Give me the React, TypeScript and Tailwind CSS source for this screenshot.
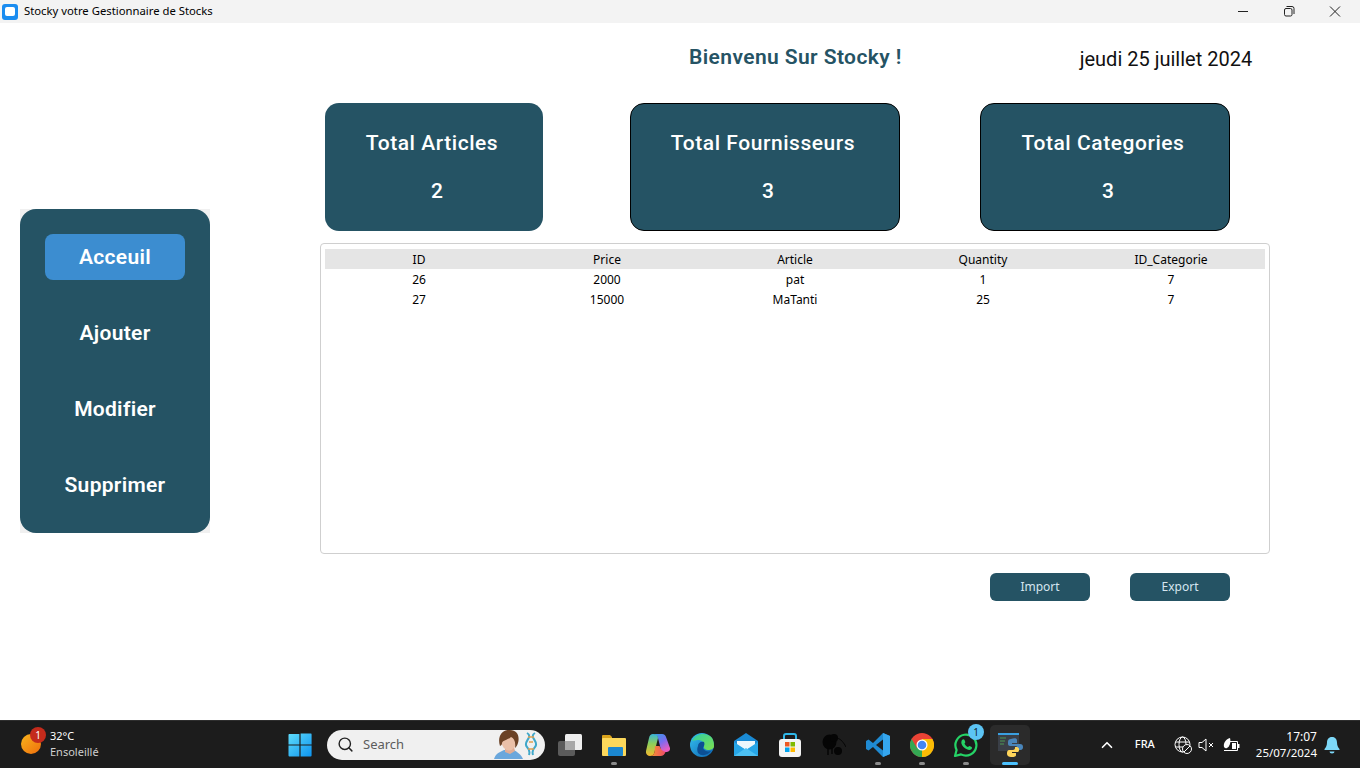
import { ChevronUp, Search } from "lucide-react";

const roboto = "font-['Roboto',sans-serif]";
const segoe = "font-['Noto_Sans',sans-serif]";

const rows = [
  ["26", "2000", "pat", "1", "7"],
  ["27", "15000", "MaTanti", "25", "7"],
];

function StatCard({ title, value, className, valueClass }: { title: string; value: string; className: string; valueClass: string }) {
  return (
    <div className={`h-[128px] shrink-0 rounded-[14px] border bg-[#255364] pr-[4px] text-white ${className}`}>
      <div className="mt-[25px] h-[28px] text-center text-[21px] leading-[28px] font-medium tracking-[0.55px]">{title}</div>
      <div className={`mt-[20px] h-[28px] text-center text-[21px] leading-[28px] font-medium ${valueClass}`}>{value}</div>
    </div>
  );
}

function NavItem({ label, active }: { label: string; active?: boolean }) {
  return (
    <div className={`flex h-[46px] w-[140px] items-center justify-center rounded-[8px] pt-[2px] text-[21px] font-semibold tracking-[0.3px] text-white ${active ? "bg-[#3c8dd0]" : ""}`}>
      {label}
    </div>
  );
}

function WinLogo() {
  return (
    <svg width="24" height="24" viewBox="0 0 24 24">
      <defs>
        <linearGradient id="wl" x1="0" y1="0" x2="1" y2="1">
          <stop offset="0" stopColor="#5fdcfb" />
          <stop offset="1" stopColor="#0d94f0" />
        </linearGradient>
      </defs>
      <path d="M1 1h10.4v10.4H0.5V2a1 1 0 0 1 .5-1zM12.6 .6H23a1 1 0 0 1 .6.9v9.9H12.6zM.5 12.6h10.9v10.9H1.5a1 1 0 0 1-1-1zM12.6 12.6h11v9.9a1 1 0 0 1-1 1h-10z" fill="url(#wl)" />
    </svg>
  );
}

function TaskIcon({ children, dot, active }: { children: React.ReactNode; dot?: boolean; active?: boolean }) {
  return (
    <div className={`relative flex h-[40px] items-center justify-center rounded-[5px] ${active ? "ml-[2px] w-[40px] bg-[#2b2b2b]" : "w-[44px]"}`}>
      {children}
      {dot ? <span className="absolute bottom-[0px] left-[19px] h-[3px] w-[6px] rounded-full bg-[#8c8c8c]" /> : null}
      {active ? <span className="absolute bottom-[0px] left-[12px] h-[3px] w-[16px] rounded-full bg-[#4cc2ff]" /> : null}
    </div>
  );
}

export default function App() {
  return (
    <div className="flex h-[768px] w-[1360px] flex-col overflow-hidden bg-white">
      {/* title bar */}
      <div className={`flex h-[23px] shrink-0 items-center bg-[#f3f3f3] text-[11.3px] text-black ${segoe}`}>
        <div className="ml-[2px] flex h-[16px] w-[16px] items-center justify-center rounded-[3px] bg-[#1a8cf0]">
          <div className="h-[9px] w-[10px] rounded-[2px] bg-white" />
        </div>
        <span className="ml-[6px]">Stocky votre Gestionnaire de Stocks</span>
        <div className="ml-auto flex items-center">
          <svg width="46" height="22" viewBox="0 0 46 22"><path d="M18 10.500h10" stroke="#222" strokeWidth="1" /></svg>
          <svg width="46" height="22" viewBox="0 0 46 22"><rect x="18.500" y="7.500" width="7.500" height="7.500" rx="1.500" fill="none" stroke="#222" /><path d="M20.500 5.500h5.500a2 2 0 0 1 2 2v5.500" fill="none" stroke="#222" /></svg>
          <svg width="46" height="22" viewBox="0 0 46 22" className="mr-[2px]"><path d="M18 5.500l10 10M28 5.500l-10 10" stroke="#222" /></svg>
        </div>
      </div>

      {/* window body */}
      <div className={`flex min-h-0 flex-1 ${roboto}`}>
        <div className="ml-[20px] mt-[186px] h-[324px] w-[190px] shrink-0 bg-[#f0f0f0]">
          <aside className="flex h-full flex-col items-center gap-[30px] rounded-[16px] bg-[#255364] pt-[25px]">
            <NavItem label="Acceuil" active />
            <NavItem label="Ajouter" />
            <NavItem label="Modifier" />
            <NavItem label="Supprimer" />
          </aside>
        </div>

        <main className="ml-[110px] w-[950px] shrink-0">
          <div className="flex h-[80px] items-start">
            <h1 className="ml-[369px] mt-[21px] text-[21px] leading-[26px] font-semibold tracking-[0.4px] whitespace-nowrap text-[#255364]">Bienvenu Sur Stocky !</h1>
            <div className="ml-[178px] mt-[23px] text-[20px] leading-[26px] whitespace-nowrap text-[#111]">jeudi 25 juillet 2024</div>
          </div>

          <div className="flex pl-[5px]">
            <StatCard title="Total Articles" value="2" className="w-[218px] border-transparent" valueClass="pl-[10px]" />
            <StatCard title="Total Fournisseurs" value="3" className="ml-[87px] w-[270px] border-black" valueClass="pl-[10px]" />
            <StatCard title="Total Categories" value="3" className="ml-[80px] w-[250px] border-black" valueClass="pl-[10px]" />
          </div>

          <div className={`mt-[12px] h-[311px] rounded-[4px] border border-[#cfcfcf] px-[4px] pt-[5px] text-[12px] text-black ${segoe}`}>
            <div className="grid h-[20px] grid-cols-5 items-center bg-[#e5e5e5] pt-[2px] text-center">
              <span>ID</span>
              <span>Price</span>
              <span>Article</span>
              <span>Quantity</span>
              <span>ID_Categorie</span>
            </div>
            {rows.map((row) => (
              <div key={row[0]} className="grid h-[20px] grid-cols-5 items-center pt-[2px] text-center">
                {row.map((cell, i) => (
                  <span key={i}>{cell}</span>
                ))}
              </div>
            ))}
          </div>

          <div className={`mt-[19px] flex gap-[40px] pl-[670px] text-[12px] text-[#d5e6f0] ${segoe}`}>
            <div className="flex h-[28px] w-[100px] items-center justify-center rounded-[6px] bg-[#255364]">Import</div>
            <div className="flex h-[28px] w-[100px] items-center justify-center rounded-[6px] bg-[#255364]">Export</div>
          </div>
        </main>
      </div>

      {/* taskbar */}
      <footer className={`flex h-[48px] shrink-0 items-center border-t border-[#2e2e2e] bg-[#1c1c1c] text-white ${segoe}`}>
        <div className="relative ml-[21px] flex w-[267px] shrink-0 items-center pb-[2px]">
          <div className="h-[20px] w-[20px] rounded-full bg-gradient-to-br from-[#f8b41c] to-[#ee6c0c]" />
          <span className="absolute left-[9px] top-[-1px] flex h-[16px] w-[16px] items-center justify-center rounded-full bg-[#c42b1c] text-[10px] leading-none text-white">1</span>
          <div className="ml-[9px] text-[11px] leading-[16px]">
            <div>32°C</div>
            <div className="text-[#cfcfcf]">Ensoleillé</div>
          </div>
        </div>
        <div className="flex w-[39px] shrink-0 items-center">
          <WinLogo />
        </div>
        <div className="flex h-[30px] w-[218px] shrink-0 items-center rounded-full bg-[#f0f0f0] pl-[10px] text-[13px] text-[#5c5c5c]">
          <Search size={17} strokeWidth={2} className="text-[#222]" />
          <span className="ml-[9px]">Search</span>
          <svg width="44" height="29" viewBox="0 0 44 29" className="ml-auto mr-[7px]">
            <path d="M0 29c2-6 6-7 10-9l10 0c3 2 7 4 9 9z" fill="#6aa7dc" />
            <path d="M11 18l0 4 5 2 5-3-1-4z" fill="#e0ad96" />
            <ellipse cx="15" cy="11" rx="7.500" ry="9.500" fill="#eac0a8" />
            <path d="M6 16C3 7 8-1 16 0c7 0 10 6 8 13-1 3-2 4-3 5 1-6-1-10-4-11-3 3-8 3-9 6 0 1 0 2-2 3z" fill="#6b4226" />
            <path d="M33 3c7 4-5 9 0 14 2 2 3 5 2 8M41 3c-7 4 5 9 0 14-2 2-3 5-2 8" fill="none" stroke="#3fa7c9" strokeWidth="2" />
            <path d="M34 7h6M35 12h4M34 19h6" stroke="#e0a050" strokeWidth="1.400" />
          </svg>
        </div>

        <div className="ml-[3px] flex shrink-0 items-center">
          <TaskIcon>
            <svg width="26" height="24" viewBox="0 0 26 24"><rect x="1" y="8" width="17" height="15" rx="2" fill="#5b5b5b" /><rect x="8" y="1" width="17" height="16" rx="1.500" fill="#eeeeee" /><rect x="8" y="8" width="10" height="9" fill="#a8a8a8" /></svg>
          </TaskIcon>
          <TaskIcon dot>
            <svg width="24" height="22" viewBox="0 0 24 22"><path d="M0 2a1 1 0 0 1 1-1h7l2 2h0v2H0z" fill="#d9a21b" /><rect y="4" width="24" height="18" rx="1" fill="#fbd75b" /><rect x="6" y="13" width="15" height="9" rx="1" fill="#1b87d0" /></svg>
          </TaskIcon>
          <TaskIcon>
            <svg width="24" height="22" viewBox="0 0 24 22">
              <defs>
                <linearGradient id="cp1" x1="0" y1="0" x2="0.6" y2="1"><stop offset="0" stopColor="#2f9fe8" /><stop offset=".55" stopColor="#7a6cf0" /><stop offset="1" stopColor="#ea5cc0" /></linearGradient>
                <linearGradient id="cp2" x1="0.5" y1="0" x2="0.5" y2="1"><stop offset="0" stopColor="#38b6d8" /><stop offset=".45" stopColor="#8fcf58" /><stop offset="1" stopColor="#f4b82e" /></linearGradient>
                <linearGradient id="cp3" x1="0" y1="0" x2="1" y2="0"><stop offset="0" stopColor="#f59a2c" /><stop offset="1" stopColor="#ee4a68" /></linearGradient>
              </defs>
              <path d="M7 0h9c2.500 0 3.500 1.200 4.200 3.500L24 14c.4 2.500-1.500 4-3.500 4h-5L12 4C11.500 2 10 .5 7 0z" fill="url(#cp1)" />
              <path d="M7 0c3 0 5 1.500 5 4L8.500 18c-.5 2.500-2 4-4.500 4-3 0-4.500-2.500-4-5L3 4C3.500 1.500 5 0 7 0z" fill="url(#cp2)" />
              <path d="M9 12h4.500c1.500 4 3.500 5 6 6-1 2.500-2.500 4-5 4H4c2.500 0 4-1.500 4.500-4z" fill="url(#cp3)" />
            </svg>
          </TaskIcon>
          <TaskIcon>
            <svg width="24" height="24" viewBox="0 0 24 24">
              <defs>
                <linearGradient id="ed1" x1="0" y1="0" x2="1" y2="1"><stop offset="0" stopColor="#35c1f1" /><stop offset="1" stopColor="#0b62b0" /></linearGradient>
                <linearGradient id="ed2" x1="0" y1="0" x2="1" y2="1"><stop offset="0" stopColor="#2fcfa5" /><stop offset="1" stopColor="#7ee04e" /></linearGradient>
              </defs>
              <circle cx="12" cy="12" r="12" fill="url(#ed1)" />
              <path d="M2 8C5 1 14-1 20 3c3 2 4 6 4 10 0 3-3 4-6 4-3 0-5-2-4-4 1-3-2-6-6-6-3 0-5 1-6 1z" fill="url(#ed2)" />
              <path d="M8 13c0-3 3-5 6-4 1 2 0 4-1 6 1 3 5 4 8 3-3 4-9 6-13 2-1-2-1-5 0-7z" fill="#0c4f94" />
            </svg>
          </TaskIcon>
          <TaskIcon>
            <svg width="24" height="23" viewBox="0 0 24 23"><path d="M12 0l12 8v14a1 1 0 0 1-1 1H1a1 1 0 0 1-1-1V8z" fill="#1a8ad4" /><path d="M3 8h18v4l-9 5-9-5z" fill="#eef7fc" /><path d="M0 9l12 8 12-8v14H0z" fill="#27a6e8" /><path d="M0 23l12-8 12 8z" fill="#4cc0f2" /></svg>
          </TaskIcon>
          <TaskIcon>
            <svg width="24" height="24" viewBox="0 0 24 24"><path d="M6 7V3a2 2 0 0 1 2-2h8a2 2 0 0 1 2 2v4" fill="none" stroke="#2fb7e8" strokeWidth="2" /><rect x="1" y="6" width="22" height="18" rx="3" fill="#f4f4f4" /><rect x="7" y="9" width="4.500" height="4.500" fill="#ee5a24" /><rect x="12.500" y="9" width="4.500" height="4.500" fill="#7fba00" /><rect x="7" y="14.500" width="4.500" height="4.500" fill="#00a4ef" /><rect x="12.500" y="14.500" width="4.500" height="4.500" fill="#ffb900" /></svg>
          </TaskIcon>
          <TaskIcon>
            <svg width="24" height="23" viewBox="0 0 24 23"><ellipse cx="7.500" cy="9" rx="7" ry="7.500" fill="#050505" /><circle cx="12" cy="5" r="4" fill="#050505" /><path d="M15 5c4 1 7 5 9 9" fill="none" stroke="#050505" strokeWidth="1" /><path d="M6 15v7M10 15v6" stroke="#050505" strokeWidth="1.500" /><circle cx="16" cy="18" r="4" fill="#050505" /></svg>
          </TaskIcon>
          <TaskIcon dot>
            <svg width="24" height="24" viewBox="0 0 24 24"><path d="M17 0l7 3v18l-7 3L7 14l-4.500 3.500L0 16v-8l2.500-1.500L7 10z" fill="#1f8ad2" /><path d="M17 6.500L10 12l7 5.500z" fill="#1c1c1c" /><path d="M17 0l7 3v18l-7 3z" fill="#35a6ee" /></svg>
          </TaskIcon>
          <TaskIcon dot>
            <svg width="24" height="24" viewBox="0 0 24 24"><circle cx="12" cy="12" r="12" fill="#ea4335" /><path d="M12 12L22.400 18A12 12 0 0 1 12 24 12 12 0 0 1 1.600 18z" fill="#34a853" /><path d="M12 6h10.400A12 12 0 0 1 22.400 18 12 12 0 0 1 12 24z" fill="#fbbc05" /><path d="M1.600 6L7 15 1.600 18A12 12 0 0 1 1.600 6z" fill="#34a853" /><circle cx="12" cy="12" r="5.500" fill="#fff" /><circle cx="12" cy="12" r="4.300" fill="#4285f4" /></svg>
          </TaskIcon>
          <TaskIcon dot>
            <svg width="26" height="26" viewBox="0 0 26 26"><path d="M2 24l1.600-6A10.500 10.500 0 1 1 8 22.400z" fill="none" stroke="#25d366" strokeWidth="2.200" strokeLinejoin="round" /><path d="M9 8c1-1 2-1 2.500 0l.8 2c0 .8-.8 1.200-.8 1.800.8 1.500 2 2.600 3.300 3.200.7 0 1-1 1.800-1l2 1c.7.500.4 1.800-.3 2.300-1 .8-2.700.8-4.500 0-2.500-1-4.500-3.200-5.300-5.500-.4-1.500 0-3 .5-3.800z" fill="#25d366" /></svg>
            <span className="absolute left-[24px] top-[-1px] flex h-[16px] w-[16px] items-center justify-center rounded-full bg-[#5cc4f4] text-[10px] leading-none text-[#10252e]">1</span>
          </TaskIcon>
          <TaskIcon active>
            <svg width="25" height="24" viewBox="0 0 25 24"><rect x="0" y="0" width="21" height="18" fill="#3a3f47" /><rect x="0" y="0" width="21" height="2" fill="#3aa0e0" /><path d="M2 5h6M2 8h5M2 11h4" stroke="#4d9a55" /><path d="M13 6c3-1 6-1 6 1v3h-5v1h8c2 0 3 1 3 3 0 3-2 3-4 3h-2v-3c0-1-1-1-2-1h-5c-1 0-2-1-2-2V9c0-2 1-3 3-3z" fill="#4a86bb" /><path d="M11 17h4c1 0 2-1 2-2v-1h2c1 0 2 1 2 2 0 2 0 2-1 3h-6v1h4v2c0 2-3 2-5 2s-4-1-4-3v-1c0-2 1-3 2-3z" fill="#ffd55a" /></svg>
          </TaskIcon>
        </div>

        <div className="ml-auto flex shrink-0 items-center text-white">
          <ChevronUp size={18} strokeWidth={2.200} className="mr-[19px]" />
          <span className="mr-[19px] text-[11px] font-medium">FRA</span>
          <svg width="18" height="18" viewBox="0 0 18 18" fill="none" stroke="#fff" className="mr-[6px]"><circle cx="8.500" cy="8.500" r="7.500" /><ellipse cx="8.500" cy="8.500" rx="3.500" ry="7.500" /><path d="M1.500 6h14M1.500 11h9" /><circle cx="13" cy="13" r="4.500" fill="#1c1c1c" /><path d="M10 16l6-6" /></svg>
          <svg width="16" height="16" viewBox="0 0 16 16" fill="none" stroke="#fff" className="mr-[9px]"><path d="M1 5.500h3L8 2v12l-4-3.500H1z" /><path d="M11 6l4 4M15 6l-4 4" /></svg>
          <svg width="17" height="14" viewBox="0 0 17 14" className="mr-[16px]"><path d="M4 3.500h10.500v9H1" fill="none" stroke="#fff" /><rect x="15" y="6" width="1.500" height="4" fill="#fff" /><rect x="9" y="5" width="4" height="6" fill="#fff" /><path d="M1 9C0 5 3 1 7 0c1 4 0 8-3 10-1 .6-2 .4-3-1z" fill="#fff" /></svg>
          <div className="text-right text-[11.500px] leading-[16px]">
            <div className="text-[12px]">17:07</div>
            <div>25/07/2024</div>
          </div>
          <svg width="16" height="18" viewBox="0 0 16 18" className="ml-[7px] mr-[20px]"><path d="M8 1c3.500 0 5 2.500 5 5.500 0 3 1 5 2.500 6.500v1H.500v-1C2 11.500 3 9.500 3 6.500 3 3.500 4.500 1 8 1z" fill="#7dd8f8" /><path d="M5.500 15.500a2.500 2 0 0 0 5 0z" fill="#7dd8f8" /></svg>
        </div>
      </footer>
    </div>
  );
}
